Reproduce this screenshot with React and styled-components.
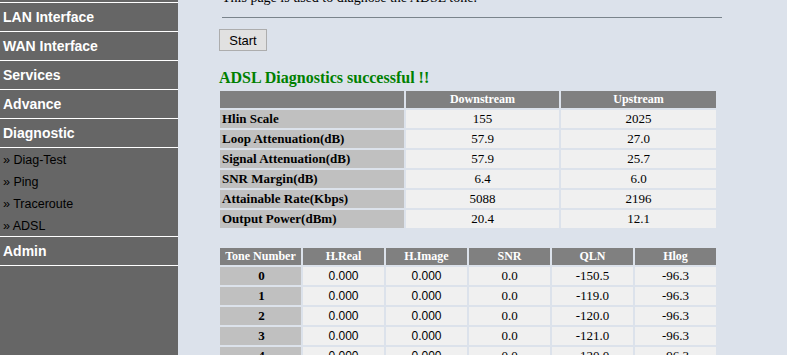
import React from 'react'
import styled, { createGlobalStyle } from 'styled-components'

const GlobalStyle = createGlobalStyle`
  html, body {
    margin: 0;
    padding: 0;
    background: #dce2eb;
    overflow: hidden;
  }
`;

const Page = styled.div`
  display: flex;
  align-items: stretch;
  margin-top: -26px;
  min-height: 420px;
`;

const Sidebar = styled.nav`
  width: 178px;
  flex-shrink: 0;
  background: #666666;
  font-family: "Liberation Sans", Arial, sans-serif;
`;

const MenuItem = styled.div`
  height: 28px;
  line-height: 28px;
  padding-left: 3px;
  border-bottom: 1px solid #ffffff;
  color: #ffffff;
  font-size: 14px;
  font-weight: bold;
`;

const SubMenu = styled.div`
  border-bottom: 1px solid #ffffff;
`;

const SubItem = styled.div`
  height: 22px;
  line-height: 24px;
  padding-left: 3px;
  font-size: 12.5px;
  color: #000000;
`;

const Main = styled.main`
  flex: 1;
  padding: 16px 0 0 40px;
  font-family: "Liberation Serif", "Times New Roman", serif;
  color: #000;
`;

const Intro = styled.p`
  margin: 0 0 0 4px;
  font-size: 14px;
  line-height: 16px;
`;

const Rule = styled.div`
  width: 500px;
  margin: 11px 0 11px 4px;
  border-top: 1px solid #7a848c;
`;

const Button = styled.button`
  display: block;
  margin-left: 1px;
  width: 48px;
  height: 22px;
  padding: 0;
  background: #e1e1e1;
  border: 1px solid #adadad;
  font-family: "Liberation Sans", Arial, sans-serif;
  font-size: 13px;
  color: #000;
`;

const Status = styled.h3`
  margin: 17px 0 1px 1px;
  font-size: 16px;
  line-height: 20px;
  font-weight: bold;
  color: #008000;
`;

const Table = styled.table`
  border-collapse: separate;
  border-spacing: 2px;
  margin-top: ${p => p.$gap || 0}px;
  table-layout: fixed;
`;

const Head = styled.th`
  height: 17px;
  padding: 0;
  background: #808080;
  color: #ffffff;
  font-size: 12px;
  font-weight: bold;
  line-height: 17px;
  text-align: center;
  white-space: nowrap;
`;

const Label = styled.td`
  height: 18px;
  padding: 0 0 0 2px;
  background: #c0c0c0;
  font-size: 13px;
  font-weight: bold;
  line-height: 18px;
  text-align: ${p => (p.$center ? 'center' : 'left')};
`;

const Value = styled.td`
  height: 18px;
  padding: 0;
  background: #f0f0f0;
  font-size: ${p => (p.$sans ? 12 : 13)}px;
  font-family: ${p => (p.$sans ? '"Liberation Sans", Arial, sans-serif' : 'inherit')};
  line-height: 18px;
  text-align: center;
`;

const menu = ['Status', 'LAN Interface', 'WAN Interface', 'Services', 'Advance', 'Diagnostic'];
const subMenu = ['Diag-Test', 'Ping', 'Traceroute', 'ADSL'];

const stats = [
  ['Hlin Scale', '155', '2025'],
  ['Loop Attenuation(dB)', '57.9', '27.0'],
  ['Signal Attenuation(dB)', '57.9', '25.7'],
  ['SNR Margin(dB)', '6.4', '6.0'],
  ['Attainable Rate(Kbps)', '5088', '2196'],
  ['Output Power(dBm)', '20.4', '12.1'],
];

const tones = [
  ['0', '0.000', '0.000', '0.0', '-150.5', '-96.3'],
  ['1', '0.000', '0.000', '0.0', '-119.0', '-96.3'],
  ['2', '0.000', '0.000', '0.0', '-120.0', '-96.3'],
  ['3', '0.000', '0.000', '0.0', '-121.0', '-96.3'],
  ['4', '0.000', '0.000', '0.0', '-120.0', '-96.3'],
];

export default function App() {
  return (
    <>
      <GlobalStyle />
      <Page>
        <Sidebar>
          {menu.map(m => <MenuItem key={m}>{m}</MenuItem>)}
          <SubMenu>
            {subMenu.map(s => <SubItem key={s}>» {s}</SubItem>)}
          </SubMenu>
          <MenuItem>Admin</MenuItem>
        </Sidebar>
        <Main>
          <Intro>This page is used to diagnose the ADSL tone.</Intro>
          <Rule />
          <Button>Start</Button>
          <Status>ADSL Diagnostics successful !!</Status>
          <Table>
            <colgroup>
              <col style={{ width: 184 }} />
              <col style={{ width: 153 }} />
              <col style={{ width: 155 }} />
            </colgroup>
            <thead>
              <tr><Head></Head><Head>Downstream</Head><Head>Upstream</Head></tr>
            </thead>
            <tbody>
              {stats.map(r => (
                <tr key={r[0]}>
                  <Label>{r[0]}</Label>
                  <Value>{r[1]}</Value>
                  <Value>{r[2]}</Value>
                </tr>
              ))}
            </tbody>
          </Table>
          <Table $gap={16}>
            <colgroup>
              {[0, 1, 2, 3, 4, 5].map(i => <col key={i} style={{ width: 81 }} />)}
            </colgroup>
            <thead>
              <tr>
                <Head>Tone Number</Head>
                <Head>H.Real</Head>
                <Head>H.Image</Head>
                <Head>SNR</Head>
                <Head>QLN</Head>
                <Head>Hlog</Head>
              </tr>
            </thead>
            <tbody>
              {tones.map(r => (
                <tr key={r[0]}>
                  <Label $center>{r[0]}</Label>
                  <Value $sans>{r[1]}</Value>
                  <Value $sans>{r[2]}</Value>
                  <Value>{r[3]}</Value>
                  <Value>{r[4]}</Value>
                  <Value>{r[5]}</Value>
                </tr>
              ))}
            </tbody>
          </Table>
        </Main>
      </Page>
    </>
  )
}
